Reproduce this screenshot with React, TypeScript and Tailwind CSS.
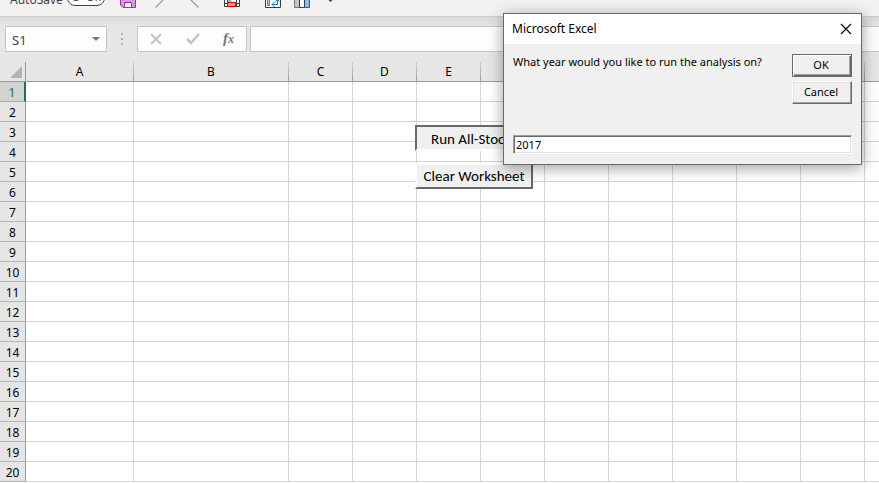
import type { ReactNode } from "react";

const columns = [
  { name: "A", width: "w-[108px]" },
  { name: "B", width: "w-[155px]" },
  ...["C", "D", "E", "F", "G", "H", "I", "J", "K", "L"].map((name) => ({
    name,
    width: "w-16",
  })),
];

const rows = Array.from({ length: 20 }, (_, i) => i + 1);

function ToolButton({ label, children }: { label: string; children: ReactNode }) {
  return (
    <button type="button" aria-label={label} className="block size-4 shrink-0">
      {children}
    </button>
  );
}

function QuickAccessBar() {
  return (
    <header className="flex h-[17px] flex-col justify-end overflow-hidden border-b border-[#d0d0d0] bg-[#f3f2f1]">
      <div className="flex h-8 shrink-0 items-center pl-[10px]">
        <span className="w-[57px] shrink-0 text-[12px] leading-4 text-[#444]">AutoSave</span>
        <button
          type="button"
          role="switch"
          aria-checked="false"
          aria-label="AutoSave"
          className="mb-1 flex h-4 w-[38px] shrink-0 items-center gap-[6px] rounded-full border border-[#444] bg-white pb-[2px] pl-1 text-[11px] leading-3 text-[#444]"
        >
          <span className="size-2 rounded-full bg-[#444]" />
          Off
        </button>
        <div className="ml-[15px] flex items-center">
          <ToolButton label="Save">
            <svg viewBox="0 0 16 16" className="size-4">
              <path d="M.5.5h15v15H3L.5 13z" fill="#d59bdd" stroke="#9332a0" />
              <path d="M4.5 15.5v-5h7v5z" fill="#fff" stroke="#9332a0" />
            </svg>
          </ToolButton>
          <div className="ml-[18px] flex gap-5">
            <ToolButton label="Undo">
              <svg viewBox="0 0 16 16" className="size-4">
                <path d="m1.500 15.500 8-8Q14 1 8 1H2" fill="none" stroke="#999" strokeWidth="1.200" />
              </svg>
            </ToolButton>
            <ToolButton label="Redo">
              <svg viewBox="0 0 16 16" className="size-4">
                <path d="m8.500 15.500-8-8Q-2 1 4 1h8" fill="none" stroke="#999" strokeWidth="1.200" />
              </svg>
            </ToolButton>
          </div>
          <div className="ml-[18px] flex">
            <ToolButton label="Format table">
              <svg viewBox="0 0 16 16" className="size-4">
                <path d="M.5.5h15v14H.5z" fill="#fff" stroke="#3b3b3b" />
                <path d="M3.500 7h4v4h-4z" fill="#83beec" />
                <path d="M3.500 0v15M12.500 0v15M0 6.500h16M0 11.500h16" stroke="#3b3b3b" />
                <path d="M3.500 10.500h8v4h-8z" fill="#ff8a80" stroke="#d40000" />
              </svg>
            </ToolButton>
          </div>
          <div className="ml-[25px] flex gap-[13px]">
            <ToolButton label="Refresh pivot table">
              <svg viewBox="0 0 16 16" className="size-4">
                <path d="M.5.5h15v15H.5z" fill="#fff" stroke="#3b3b3b" />
                <path d="M2.500 5.500h2v8h-2z" fill="#c8c6c4" stroke="#797774" />
                <path d="M7 12.500h5.500V8M9.500 10 7 12.500 9.500 15M10.500 9.500l2-2 2 2" fill="none" stroke="#1e7bc4" />
              </svg>
            </ToolButton>
            <ToolButton label="Freeze columns">
              <svg viewBox="0 0 16 16" className="size-4">
                <path d="M.5.5h5v15h-5z" fill="#c8c6c4" stroke="#797774" />
                <path d="M10.500.5h5v15h-5z" fill="#83beec" stroke="#1664a7" />
                <path d="M5.500.5h5v15h-5z" fill="#fff" stroke="#3b3b3b" />
              </svg>
            </ToolButton>
          </div>
          <div className="ml-3 flex">
            <ToolButton label="Customize toolbar">
              <svg viewBox="0 0 16 16" className="size-4">
                <path d="M5.500 6 8.500 9l3-3" fill="none" stroke="#444" strokeWidth="1.500" />
              </svg>
            </ToolButton>
          </div>
        </div>
      </div>
    </header>
  );
}

function FormulaBar() {
  return (
    <div className="flex h-[45px] items-start bg-linear-to-b from-[#dadada] to-[#e6e6e6] to-[9px] pt-[9px] pl-[5px]">
      <div className="flex h-[26px] w-[102px] shrink-0 items-center border border-[#c6c6c6] bg-[#fdfdfd] px-[6px]">
        <input
          aria-label="Name box"
          defaultValue="S1"
          className="w-full min-w-0 bg-transparent pt-[2px] text-[13px] leading-4 text-[#444] outline-none"
        />
        <svg viewBox="0 0 8 4" className="h-1 w-2 shrink-0" aria-hidden="true">
          <path d="M0 0h8L4 4z" fill="#777" />
        </svg>
      </div>
      <svg viewBox="0 0 2 12" className="mt-[7px] ml-[14px] h-3 w-[2px] shrink-0" aria-hidden="true">
        <path d="M0 0h2v2H0zM0 5h2v2H0zM0 10h2v2H0z" fill="#b0b0b0" />
      </svg>
      <div className="ml-[14px] flex h-[26px] w-[110px] shrink-0 items-center justify-between border border-[#c6c6c6] bg-[#fdfdfd] px-3">
        <button type="button" aria-label="Cancel entry">
          <svg viewBox="0 0 12 12" className="size-3">
            <path d="m1 1 10 10M11 1 1 11" stroke="#c3c3c3" strokeWidth="2" />
          </svg>
        </button>
        <button type="button" aria-label="Enter">
          <svg viewBox="0 0 14 12" className="h-3 w-[14px]">
            <path d="m1 6 4 4 8-9" fill="none" stroke="#c3c3c3" strokeWidth="2.500" />
          </svg>
        </button>
        <button
          type="button"
          aria-label="Insert function"
          className="pb-[2px] font-['Liberation_Serif',serif] text-[15px] leading-4 font-bold text-[#777] italic"
        >
          f<span className="text-[12px]">x</span>
        </button>
      </div>
      <input
        aria-label="Formula"
        className="ml-[3px] h-[26px] min-w-0 flex-1 border border-r-0 border-[#c6c6c6] bg-[#fdfdfd] px-2 text-[12px] outline-none"
      />
    </div>
  );
}

function Sheet() {
  return (
    <main className="relative flex-1 overflow-hidden bg-white">
      <table className="w-max table-fixed border-separate border-spacing-0 text-[12px] leading-4">
        <thead className="bg-[#e6e6e6]">
          <tr className="h-5">
            <th aria-label="Select all" className="w-[26px] border-r border-b border-[#9b9b9b] p-0">
              <svg viewBox="0 0 12 12" className="ml-[10px] size-3" aria-hidden="true">
                <path d="M12 0v12H0z" fill="#b2b2b2" />
              </svg>
            </th>
            {columns.map(({ name, width }) => (
              <th
                key={name}
                scope="col"
                className={`${width} border-b border-[#9b9b9b] bg-[linear-gradient(to_bottom,#d0d0d0,#9b9b9b)] bg-[length:1px_100%] bg-right bg-no-repeat p-0 pr-px font-normal`}
              >
                {name}
              </th>
            ))}
          </tr>
        </thead>
        <tbody>
          {rows.map((row) => (
            <tr key={row} className="h-5">
              <th
                scope="row"
                className={
                  row === 1
                    ? "border-r-2 border-b border-r-[#217346] border-b-[#ababab] bg-[#d2d2d2] p-0 pt-[2px] font-normal text-[#217346]"
                    : "border-r border-b border-r-[#9b9b9b] border-b-[#b5b5b5] bg-[#e6e6e6] p-0 pt-[2px] font-normal"
                }
              >
                {row}
              </th>
              {columns.map(({ name }) => (
                <td key={name} className="border-r border-b border-[#d4d4d4] p-0" />
              ))}
            </tr>
          ))}
        </tbody>
      </table>
      <div className="absolute top-[63px] left-[415px] flex w-[118px] flex-col gap-3 font-['Carlito','Lato',sans-serif] text-[15px] leading-5">
        <button
          type="button"
          className="h-[26px] border-2 border-t-[#696969] border-r-white border-b-white border-l-[#696969] bg-[#f0f0f0] pt-px whitespace-nowrap"
        >
          Run All-Stocks
        </button>
        <button
          type="button"
          className="h-[26px] border-2 border-t-white border-r-[#696969] border-b-[#696969] border-l-white bg-[#f0f0f0] whitespace-nowrap"
        >
          Clear Worksheet
        </button>
      </div>
    </main>
  );
}

function YearDialog() {
  return (
    <form
      role="dialog"
      aria-labelledby="dialog-title"
      onSubmit={(event) => event.preventDefault()}
      className="absolute top-[13px] left-[503px] w-[359px] border border-[#696969] bg-[#f0f0f0] text-[11px] leading-4 text-black shadow-[0_3px_14px_rgba(0,0,0,0.38)]"
    >
      <div className="flex h-[30px] items-center justify-between bg-white pr-[9px] pl-2">
        <h1 id="dialog-title" className="text-[12px]">
          Microsoft Excel
        </h1>
        <button type="button" aria-label="Close">
          <svg viewBox="0 0 12 12" className="size-3">
            <path d="m1 1 10 10M11 1 1 11" stroke="#000" strokeWidth="1.100" />
          </svg>
        </button>
      </div>
      <div className="px-[9px] py-[10px]">
        <div className="flex h-[81px] items-start justify-between">
          <label htmlFor="year" className="whitespace-nowrap">
            What year would you like to run the analysis on?
          </label>
          <div className="flex w-[60px] flex-col gap-1">
            <button
              type="submit"
              className="h-[23px] border border-[#696969] bg-[#f0f0f0] pr-[2px] pb-[2px] shadow-[inset_1px_1px_#fff,inset_-1px_-1px_#696969,inset_-2px_-2px_#a0a0a0]"
            >
              OK
            </button>
            <button
              type="button"
              className="h-[23px] border border-t-white border-r-[#696969] border-b-[#696969] border-l-white bg-[#f0f0f0] pr-[2px] pb-[2px] shadow-[inset_-1px_-1px_#a0a0a0,inset_1px_1px_#e3e3e3]"
            >
              Cancel
            </button>
          </div>
        </div>
        <input
          id="year"
          defaultValue="2017"
          className="block h-[19px] w-full border border-t-[#a0a0a0] border-r-white border-b-white border-l-[#a0a0a0] bg-white px-[2px] shadow-[inset_1px_1px_#696969,inset_-1px_-1px_#e3e3e3] outline-none"
        />
      </div>
    </form>
  );
}

export default function App() {
  return (
    <div className="relative flex h-screen flex-col overflow-hidden bg-white font-['Segoe_UI','Noto_Sans',sans-serif] text-black">
      <QuickAccessBar />
      <FormulaBar />
      <Sheet />
      <YearDialog />
    </div>
  );
}
